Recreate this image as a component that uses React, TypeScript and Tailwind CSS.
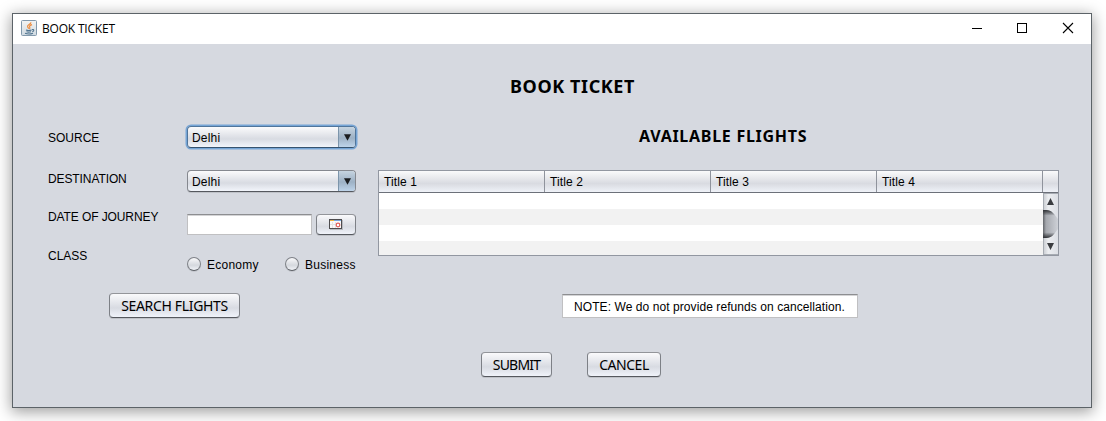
import React from "react";

const BUTTON =
  "box-border flex items-center justify-center rounded-[4px] border border-[#7d8086] border-t-[#93959a] border-b-[#55585e] bg-linear-to-b from-[#fafafc] via-[#d8dbe2] via-60% to-[#f0f3fa] shadow-[0_1px_0_#bfc2c8]";

function JavaIcon() {
  return (
    <svg width="16" height="16" viewBox="0 0 16 16" fill="none" className="-translate-y-px">
      <defs>
        <linearGradient id="tile" x1="0" y1="0" x2="0" y2="1">
          <stop offset="0" stopColor="#f4f4f2" />
          <stop offset="1" stopColor="#cfdae2" />
        </linearGradient>
      </defs>
      <rect x="0.5" y="0.5" width="15" height="15" rx="1" fill="url(#tile)" stroke="#8299ac" />
      <path d="M10 2.4C9.8 4.4 6.2 4.8 6.6 6.6C6.8 7.5 7.6 7.8 7.6 8.8M11 4.6C9 5.2 8.2 6 8.7 6.9C9.1 7.7 8.9 8.3 8.3 8.9" stroke="#ee8b3c" strokeWidth="1.2" />
      <path d="M5 10C6.5 10.6 9 10.5 10.6 10M5.5 11.8C7 12.3 8.8 12.2 10 11.8M4 13.3C6 14 10 14 12 13.2M11 9.6C13.3 8.9 13.3 11.2 11.3 11.6" stroke="#527590" strokeWidth="1.1" />
    </svg>
  );
}

function CalendarIcon() {
  return (
    <svg width="14" height="11" viewBox="0 0 14 11" shapeRendering="crispEdges">
      <rect x="1" y="1" width="13" height="10" fill="#b9bbc0" />
      <rect x="0" y="0" width="13" height="10" fill="#4d4c4f" />
      <rect x="1" y="1" width="11" height="8" fill="#fbfafa" />
      <rect x="1" y="1" width="4" height="1" fill="#f0b13c" />
      <rect x="5" y="1" width="7" height="1" fill="#76a4dc" />
      <path d="M3.5 3v6M6.5 3v6M1 5.5h6" stroke="#e6e4e4" />
      <circle cx="9" cy="6" r="1.8" fill="#fff" stroke="#e4605c" strokeWidth="1.2" shapeRendering="auto" />
    </svg>
  );
}

function ComboBox({ value, focused = false }: { value: string; focused?: boolean }) {
  return (
    <div
      className={
        "flex h-[22px] w-[169px] overflow-hidden rounded-[4px] border bg-linear-to-b from-[#fbfbfc] via-[#d8dbe2] via-60% to-[#f2f5fb] " +
        (focused
          ? "border-[#50759b] border-b-[#36536f] shadow-[0_0_0_1.5px_#76a5d6]"
          : "border-[#85888f] border-b-[#55585e] shadow-[0_1px_0_#bfc2c8]")
      }
    >
      <span className="flex-1 pl-1 text-[12px] leading-[22px] tracking-[0.2px]">{value}</span>
      <span className="flex w-[17px] items-center justify-center border-l border-[#7c95ab] bg-linear-to-b from-[#c6d4e0] via-[#9db1c5] via-55% to-[#bed4ea]">
        <svg width="7" height="7" viewBox="0 0 7 7">
          <path d="M0 0.3H7L3.5 6.7Z" fill="#1b1d20" />
        </svg>
      </span>
    </div>
  );
}

function Radio({ label }: { label: string }) {
  return (
    <label className="flex h-[14px] items-center gap-[6px]">
      <span className="h-[14px] w-[14px] rounded-full border border-[#7e8187] border-b-[#5c5f65] bg-linear-to-b from-[#fafafb] via-[#d5d8de] via-60% to-[#f1f3f8] shadow-[0_1px_0_#c3c6cc]" />
      <span className="pt-px text-[12px] leading-[14px] tracking-[0.25px]">{label}</span>
    </label>
  );
}

function FlightsTable() {
  return (
    <div className="flex h-[86px] w-[681px] flex-col border border-[#9297a1]">
      <div className="flex h-[22px] shrink-0 border-b border-[#6c7079] bg-linear-to-b from-[#fafafb] via-[#d9dbe1] via-60% to-[#eff2f8]">
        {["Title 1", "Title 2", "Title 3", "Title 4"].map((title) => (
          <div key={title} className="w-[166px] border-r border-[#8f939c] pl-[5px] text-[12px] leading-[23px] tracking-[0.1px]">
            {title}
          </div>
        ))}
      </div>
      <div className="flex min-h-0 flex-1">
        <div className="flex w-[664px] flex-col">
          <div className="h-4 bg-white" />
          <div className="h-4 bg-[#f2f2f2]" />
          <div className="h-4 bg-white" />
          <div className="flex-1 bg-[#f2f2f2]" />
        </div>
        <svg width="15" height="62" viewBox="0 0 15 62">
          <defs>
            <linearGradient id="track">
              <stop offset="0" stopColor="#c6c9ce" />
              <stop offset="0.35" stopColor="#eceef1" />
              <stop offset="1" stopColor="#dcdfe5" />
            </linearGradient>
            <linearGradient id="groove" x1="0" x2="1">
              <stop offset="0" stopColor="#62656a" />
              <stop offset="0.2" stopColor="#a5a8ae" />
              <stop offset="1" stopColor="#ced1d7" />
            </linearGradient>
            <linearGradient id="edge" x1="0" y1="0" x2="0" y2="1">
              <stop offset="0" stopColor="#303236" />
              <stop offset="0.2" stopColor="#303236" stopOpacity="0" />
              <stop offset="0.8" stopColor="#303236" stopOpacity="0" />
              <stop offset="1" stopColor="#303236" />
            </linearGradient>
          </defs>
          <rect width="15" height="62" fill="url(#track)" />
          <path d="M0.5 0V62M0 0.5H15M0 61.5H15" stroke="#a6abb2" />
          <path d="M0 17H3C9 17 11 21 15 26V36C11 41 9 45 3 45H0Z" fill="url(#groove)" />
          <path d="M0 17H3C9 17 11 21 15 26V36C11 41 9 45 3 45H0Z" fill="url(#edge)" />
          <path d="M4 12L7.5 5L11 12ZM4 50H11L7.5 57Z" fill="#3a3c40" />
        </svg>
      </div>
    </div>
  );
}

export default function App() {
  return (
    <div className="h-[421px] w-[1106px] overflow-hidden bg-white pt-[13px] pl-[12px] font-['Liberation_Sans',sans-serif] text-black">
      <div className="flex h-[395px] w-[1080px] flex-col border border-[#5c6368] bg-[#d6d9e0] shadow-[0_3px_14px_1px_rgba(0,0,0,0.38)]">
        <header className="flex h-[30px] shrink-0 items-center bg-white pl-2">
          <JavaIcon />
          <span className="ml-[5px] flex-1 font-['Open_Sans',sans-serif] text-[12px] leading-[16px] tracking-[-0.2px]">BOOK TICKET</span>
          <svg width="125" height="30" viewBox="0 0 125 30" fill="none" stroke="#000">
            <path d="M6 14.5H16" />
            <rect x="51.5" y="9.5" width="9" height="9" />
            <path d="M97 9L107 19M107 9L97 19" strokeWidth="1.1" />
          </svg>
        </header>

        <h1 className="mt-[30px] ml-[497px] h-6 w-[140px] shrink-0 whitespace-nowrap font-['Noto_Sans',sans-serif] text-[18px] leading-6 font-bold tracking-[0.6px]">BOOK TICKET</h1>

        <main className="flex h-[253px] shrink-0">
          <form className="w-[365px] pt-[28px] pl-[35px] text-[12px]">
            <div className="flex h-11">
              <span className="w-[139px] pt-[5px] leading-[14px]">SOURCE</span>
              <ComboBox value="Delhi" focused />
            </div>
            <div className="flex h-11">
              <span className="w-[139px] pt-[2px] leading-[14px] tracking-[-0.1px]">DESTINATION</span>
              <ComboBox value="Delhi" />
            </div>
            <div className="flex h-[35px]">
              <span className="-mt-1 w-[139px] leading-[14px] tracking-[-0.1px]">DATE OF JOURNEY</span>
              <div className="h-[21px] w-[125px] border border-[#c0c0c2] border-t-[#8d8e91] bg-white shadow-[inset_0_1px_0_#d4d4d6]" />
              <div className={BUTTON + " ml-1 h-[21px] w-10"}>
                <CalendarIcon />
              </div>
            </div>
            <div className="flex h-11">
              <span className="w-[139px] leading-[14px]">CLASS</span>
              <div className="flex items-start pt-2">
                <div className="w-[98px]">
                  <Radio label="Economy" />
                </div>
                <Radio label="Business" />
              </div>
            </div>
            <div className={BUTTON + " ml-[61px] h-[25px] w-[131px] whitespace-nowrap font-['Noto_Sans',sans-serif] text-[14px] tracking-[-0.33px]"}>SEARCH FLIGHTS</div>
          </form>

          <section>
            <h2 className="mt-[26px] ml-[261px] h-6 whitespace-nowrap font-['Noto_Sans',sans-serif] text-[16px] leading-6 font-bold tracking-[0.72px]">AVAILABLE FLIGHTS</h2>
            <div className="mt-[22px]">
              <FlightsTable />
            </div>
            <div className="mt-[38px] ml-[184px] flex h-6 w-[296px] items-center border border-[#c0c0c2] border-t-[#8d8e91] bg-white pt-px pl-[11px] text-[12px] tracking-[0.075px] whitespace-nowrap shadow-[inset_0_1px_0_#d4d4d6]">
              NOTE: We do not provide refunds on cancellation.
            </div>
          </section>
        </main>

        <footer className="flex pt-px pl-[468px] font-['Noto_Sans',sans-serif] text-[14px]">
          <div className={BUTTON + " h-[25px] w-[71px] tracking-[-0.8px]"}>SUBMIT</div>
          <div className={BUTTON + " ml-[35px] h-[25px] w-[74px] tracking-[-0.45px]"}>CANCEL</div>
        </footer>
      </div>
    </div>
  );
}
